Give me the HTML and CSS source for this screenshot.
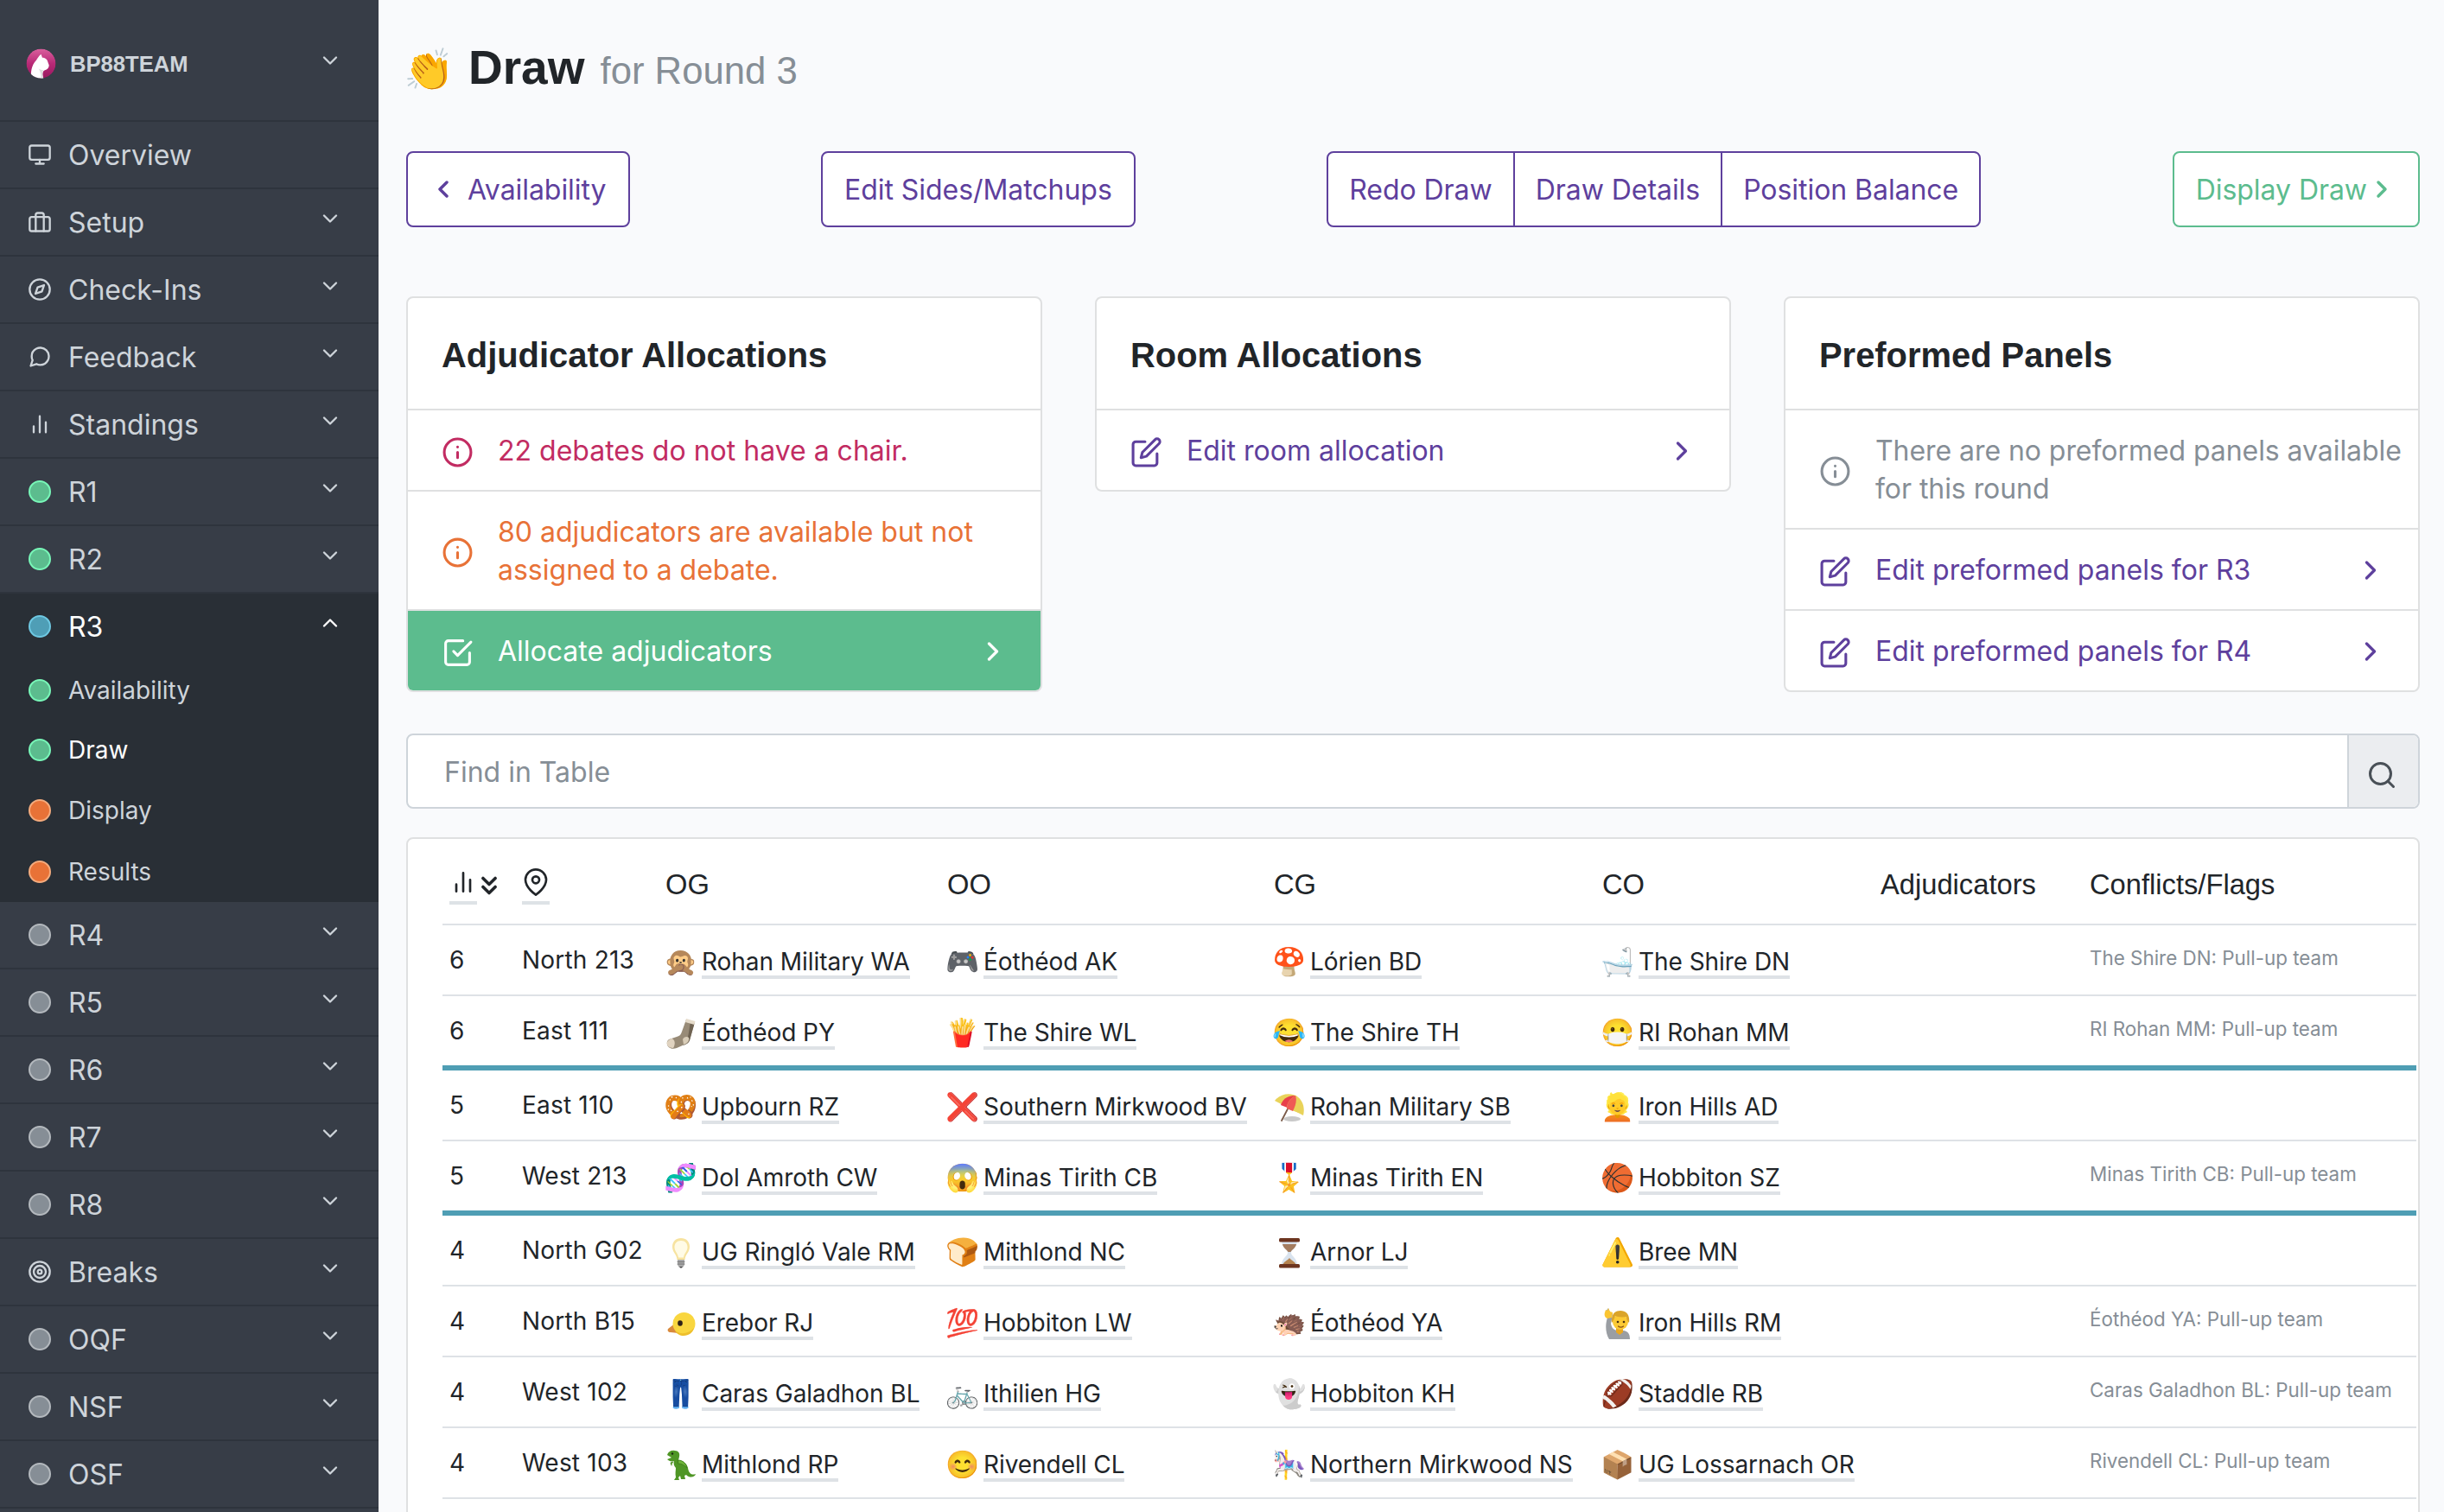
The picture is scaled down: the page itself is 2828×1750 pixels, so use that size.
FILE: index.html
```html
<!DOCTYPE html>
<html lang="en">
<head>
<meta charset="utf-8">
<title>Draw for Round 3</title>
<link rel="stylesheet" href="styles.css">
</head>
<body>
<svg class="defs" width="0" height="0" aria-hidden="true">
  <symbol id="down" viewBox="0 0 24 24"><path d="M6 9l6 6 6-6"/></symbol>
  <symbol id="up" viewBox="0 0 24 24"><path d="M18 15l-6-6-6 6"/></symbol>
  <symbol id="right" viewBox="0 0 24 24"><path d="M9 18l6-6-6-6"/></symbol>
  <symbol id="left" viewBox="0 0 24 24"><path d="M15 18l-6-6 6-6"/></symbol>
  <symbol id="bars" viewBox="0 0 24 24"><path d="M18 20V10M12 20V4M6 20v-6"/></symbol>
  <symbol id="info" viewBox="0 0 24 24"><circle cx="12" cy="12" r="10"/><path d="M12 16v-4M12 8h.01"/></symbol>
  <symbol id="edit" viewBox="0 0 24 24"><path d="M11 4H4a2 2 0 0 0-2 2v14a2 2 0 0 0 2 2h14a2 2 0 0 0 2-2v-7"/><path d="M18.5 2.5a2.121 2.121 0 0 1 3 3L12 15l-4 1 1-4 9.500-9.500z"/></symbol>
  <symbol id="check" viewBox="0 0 24 24"><path d="M9 11l3 3L22 4"/><path d="M21 12v7a2 2 0 0 1-2 2H5a2 2 0 0 1-2-2V5a2 2 0 0 1 2-2h11"/></symbol>
</svg>
<div class="app">
  <nav class="sidebar">
    <div class="brand">
      <svg class="logo" viewBox="0 0 36 36"><defs><linearGradient id="lg" x1="0" y1="0" x2="0" y2="1"><stop offset="0" stop-color="#d9609d"/><stop offset=".5" stop-color="#b92a77"/><stop offset="1" stop-color="#98185f"/></linearGradient><clipPath id="lc"><circle cx="18" cy="18" r="17.500"/></clipPath></defs><g clip-path="url(#lc)"><circle cx="18" cy="18" r="17.500" fill="url(#lg)"/><path d="M18 7l1.500 4c3 0 6 2 6.500 5l1.500 4c0 3-2 5-5 6-3 1-3 5-1.500 10H6c0-8 0-15 6.500-22 1-2 3-5 5.500-7z" fill="#fff"/><path d="M15 24c2 3 3 7 3 12h3c-2-4-2-8 0-10-3 0-5-1-6-2z" fill="#dcdcdc"/></g></svg>
      <span>BP88TEAM</span><svg class="chev"><use href="#down"/></svg>
    </div>
    <div class="item"><svg class="ico" viewBox="0 0 24 24"><rect x="2" y="3" width="20" height="14" rx="2"/><path d="M8 21h8M12 17v4"/></svg><span>Overview</span></div>
    <div class="item"><svg class="ico" viewBox="0 0 24 24"><rect x="2" y="7" width="20" height="14" rx="2"/><path d="M16 21V5a2 2 0 0 0-2-2h-4a2 2 0 0 0-2 2v16"/></svg><span>Setup</span><svg class="chev"><use href="#down"/></svg></div>
    <div class="item"><svg class="ico" viewBox="0 0 24 24"><circle cx="12" cy="12" r="10"/><path d="M16.240 7.760l-2.120 6.360-6.360 2.120 2.120-6.360z"/></svg><span>Check-Ins</span><svg class="chev"><use href="#down"/></svg></div>
    <div class="item"><svg class="ico" viewBox="0 0 24 24"><path d="M21 11.500a8.380 8.380 0 0 1-.9 3.800 8.500 8.500 0 0 1-7.600 4.700 8.380 8.380 0 0 1-3.800-.9L3 21l1.900-5.700a8.380 8.380 0 0 1-.9-3.800 8.500 8.500 0 0 1 4.700-7.600 8.380 8.380 0 0 1 3.800-.9h.5a8.480 8.480 0 0 1 8 8v.5z"/></svg><span>Feedback</span><svg class="chev"><use href="#down"/></svg></div>
    <div class="item"><svg class="ico"><use href="#bars"/></svg><span>Standings</span><svg class="chev"><use href="#down"/></svg></div>
    <div class="item"><i class="dot green"></i><span>R1</span><svg class="chev"><use href="#down"/></svg></div>
    <div class="item"><i class="dot green"></i><span>R2</span><svg class="chev"><use href="#down"/></svg></div>
    <div class="open">
      <div class="item current"><i class="dot blue"></i><span>R3</span><svg class="chev"><use href="#up"/></svg></div>
      <div class="sub"><i class="dot green"></i><span>Availability</span></div>
      <div class="sub short current"><i class="dot green"></i><span>Draw</span></div>
      <div class="sub"><i class="dot orange"></i><span>Display</span></div>
      <div class="sub"><i class="dot orange"></i><span>Results</span></div>
    </div>
    <div class="item"><i class="dot"></i><span>R4</span><svg class="chev"><use href="#down"/></svg></div>
    <div class="item"><i class="dot"></i><span>R5</span><svg class="chev"><use href="#down"/></svg></div>
    <div class="item"><i class="dot"></i><span>R6</span><svg class="chev"><use href="#down"/></svg></div>
    <div class="item"><i class="dot"></i><span>R7</span><svg class="chev"><use href="#down"/></svg></div>
    <div class="item"><i class="dot"></i><span>R8</span><svg class="chev"><use href="#down"/></svg></div>
    <div class="item"><svg class="ico" viewBox="0 0 24 24"><circle cx="12" cy="12" r="10"/><circle cx="12" cy="12" r="6"/><circle cx="12" cy="12" r="2"/></svg><span>Breaks</span><svg class="chev"><use href="#down"/></svg></div>
    <div class="item"><i class="dot"></i><span>OQF</span><svg class="chev"><use href="#down"/></svg></div>
    <div class="item"><i class="dot"></i><span>NSF</span><svg class="chev"><use href="#down"/></svg></div>
    <div class="item"><i class="dot"></i><span>OSF</span><svg class="chev"><use href="#down"/></svg></div>
  </nav>

  <main class="main">
    <h1 class="title"><span class="clap">👏</span><span>Draw</span><small>for Round 3</small></h1>

    <div class="actions">
      <a class="btn back"><svg><use href="#left"/></svg><span>Availability</span></a>
      <a class="btn"><span>Edit Sides/Matchups</span></a>
      <div class="group"><a class="btn"><span>Redo Draw</span></a><a class="btn"><span>Draw Details</span></a><a class="btn"><span>Position Balance</span></a></div>
      <a class="btn next"><span>Display Draw</span><svg><use href="#right"/></svg></a>
    </div>

    <div class="cards">
      <section class="card">
        <h2>Adjudicator Allocations</h2>
        <div class="line danger"><svg><use href="#info"/></svg><p>22 debates do not have a chair.</p></div>
        <div class="line warning"><svg><use href="#info"/></svg><p>80 adjudicators are available but not<br>assigned to a debate.</p></div>
        <a class="line success"><svg><use href="#check"/></svg><p>Allocate adjudicators</p><svg class="go"><use href="#right"/></svg></a>
      </section>
      <section class="card">
        <h2>Room Allocations</h2>
        <a class="line"><svg><use href="#edit"/></svg><p>Edit room allocation</p><svg class="go"><use href="#right"/></svg></a>
      </section>
      <section class="card">
        <h2>Preformed Panels</h2>
        <div class="line muted"><svg><use href="#info"/></svg><p>There are no preformed panels available<br>for this round</p></div>
        <a class="line"><svg><use href="#edit"/></svg><p>Edit preformed panels for R3</p><svg class="go"><use href="#right"/></svg></a>
        <a class="line"><svg><use href="#edit"/></svg><p>Edit preformed panels for R4</p><svg class="go"><use href="#right"/></svg></a>
      </section>
    </div>

    <div class="search"><div class="field">Find in Table</div><div class="addon"><svg viewBox="0 0 24 24"><circle cx="11" cy="11" r="8"/><path d="M21 21l-4.350-4.350"/></svg></div></div>

    <div class="panel">
      <table>
        <colgroup><col class="c-num"><col class="c-room"><col class="c-og"><col class="c-oo"><col class="c-cg"><col class="c-co"><col class="c-adj"><col class="c-flag"></colgroup>
        <thead>
          <tr>
            <th><div class="sort"><span class="tip"><svg><use href="#bars"/></svg></span><svg class="dir" viewBox="0 0 24 24"><path d="M7 13l5 5 5-5M7 6l5 5 5-5"/></svg></div></th>
            <th><div class="sort"><span class="tip"><svg viewBox="0 0 24 24"><path d="M21 10c0 7-9 13-9 13s-9-6-9-13a9 9 0 0 1 18 0z"/><circle cx="12" cy="10" r="3"/></svg></span></div></th>
            <th>OG</th><th>OO</th><th>CG</th><th>CO</th><th>Adjudicators</th><th>Conflicts/Flags</th>
          </tr>
        </thead>
        <tbody>
          <tr><td>6</td><td>North 213</td>
            <td><div class="team"><i>🙊</i><span>Rohan Military WA</span></div></td>
            <td><div class="team"><i>🎮</i><span>Éothéod AK</span></div></td>
            <td><div class="team"><i>🍄</i><span>Lórien BD</span></div></td>
            <td><div class="team"><i>🛁</i><span>The Shire DN</span></div></td>
            <td></td><td class="flag">The Shire DN: Pull-up team</td></tr>
          <tr class="bracket"><td>6</td><td>East 111</td>
            <td><div class="team"><svg class="pic" viewBox="0 0 36 36"><path d="M24 2l10 3-6 21c-1 3-3 4-6 5l-9 4c-5 2-10 0-11-4s1-6 5-7l6-2c4-1 5-3 6-6z" fill="#988b77"/><path d="M29 4l5 1-6 21c-1 3-4 5-8 6 5-4 6-9 7-15z" fill="#6f6352"/><path d="M24 1l10.500 3-1 4L23 5z" fill="#e6dccb"/><path d="M20 25c1-3 5-4 7-2 1 4-2 7-6 8z" fill="#d9cdb8"/><path d="M7 24c4 1 5 6 2 11-5 0-8-3-7-7 1-2 3-3 5-4z" fill="#e0d3c0"/></svg><span>Éothéod PY</span></div></td>
            <td><div class="team"><i>🍟</i><span>The Shire WL</span></div></td>
            <td><div class="team"><i>😂</i><span>The Shire TH</span></div></td>
            <td><div class="team"><i>😷</i><span>RI Rohan MM</span></div></td>
            <td></td><td class="flag">RI Rohan MM: Pull-up team</td></tr>
          <tr><td>5</td><td>East 110</td>
            <td><div class="team"><i>🥨</i><span>Upbourn RZ</span></div></td>
            <td><div class="team"><i>❌</i><span>Southern Mirkwood BV</span></div></td>
            <td><div class="team"><svg class="pic" viewBox="0 0 36 36"><ellipse cx="21" cy="31" rx="10" ry="3" fill="#c9c9c9"/><path d="M23 6L9 33" stroke="#7a5a48" stroke-width="1.800"/><path d="M1 10C7 2 19 0 27 5c7 5 9 14 7 22z" fill="#e9d35a"/><path d="M8 15C10 8 16 4 25 4c4 6 4 13 1 18z" fill="#e8404a"/><path d="M15 19c0-6 3-11 10-15 5 3 7 12 4 20z" fill="#e9d35a"/><path d="M15 19c0-6 3-11 10-15 2 6 0 12-3 18z" fill="#ef5a55"/></svg><span>Rohan Military SB</span></div></td>
            <td><div class="team"><i>👱</i><span>Iron Hills AD</span></div></td>
            <td></td><td class="flag"></td></tr>
          <tr class="bracket"><td>5</td><td>West 213</td>
            <td><div class="team"><i>🧬</i><span>Dol Amroth CW</span></div></td>
            <td><div class="team"><i>😱</i><span>Minas Tirith CB</span></div></td>
            <td><div class="team"><i>🎖️</i><span>Minas Tirith EN</span></div></td>
            <td><div class="team"><i>🏀</i><span>Hobbiton SZ</span></div></td>
            <td></td><td class="flag">Minas Tirith CB: Pull-up team</td></tr>
          <tr><td>4</td><td>North G02</td>
            <td><div class="team"><svg class="pic" viewBox="0 0 36 36"><path d="M18 1c6 0 10 4 10 10 0 7-5 8-5.500 15h-9C13 19 8 18 8 11 8 5 12 1 18 1z" fill="#f7e3a0"/><path d="M18 4c5 0 7.500 3.500 7.500 7.500 0 5-4 7-4.500 12h-6c-.5-5-4.500-7-4.500-12C10.500 7.500 13 4 18 4z" fill="#fffbe6"/><path d="M14 26h8v6l-2 3h-4l-2-3z" fill="#a9a9a9"/><path d="M14 28.500h8M14 31h8" stroke="#777" stroke-width="1"/><path d="M16 34h4l-2 2z" fill="#444"/></svg><span>UG Ringló Vale RM</span></div></td>
            <td><div class="team"><i>🍞</i><span>Mithlond NC</span></div></td>
            <td><div class="team"><svg class="pic" viewBox="0 0 36 36"><path d="M9 4h18c0 8-7 10-7 14s7 6 7 14H9c0-8 7-10 7-14S9 12 9 4z" fill="#d9e3ee"/><path d="M10 8h16c-1 5-5 6-6.500 9h-3c-1.500-3-5.500-4-6.500-9z" fill="#a47c5f"/><path d="M18 24c2 3 7 4 7.500 8h-15c.5-4 5.500-5 7.500-8z" fill="#b5834f"/><rect x="6" y="1" width="24" height="4.500" rx="1.500" fill="#6d3520"/><rect x="6" y="31" width="24" height="4.500" rx="1.500" fill="#6d3520"/></svg><span>Arnor LJ</span></div></td>
            <td><div class="team"><i>⚠️</i><span>Bree MN</span></div></td>
            <td></td><td class="flag"></td></tr>
          <tr><td>4</td><td>North B15</td>
            <td><div class="team"><svg class="pic" viewBox="0 0 36 36"><path d="M12 17l-9 7c-1 2 0 4 3 4l9 1z" fill="#d98a3d"/><circle cx="21.500" cy="18" r="13" fill="#f9d63f"/><path d="M11 26c6 5 16 4 22-3-1 5-6 9-12 9-4 0-8-2-10-6z" fill="#eebf2c"/><ellipse cx="17" cy="17.500" rx="2.800" ry="3.300" fill="#2d2018"/></svg><span>Erebor RJ</span></div></td>
            <td><div class="team"><i>💯</i><span>Hobbiton LW</span></div></td>
            <td><div class="team"><i>🦔</i><span>Éothéod YA</span></div></td>
            <td><div class="team"><svg class="pic" viewBox="0 0 36 36"><path d="M4 4l3-4 2 5 3 1-1 7-1 5c1 5 3 7 7 8h8c5 1 7 4 7 10H8C4 30 3 20 6 11z" fill="#9a9ea3"/><path d="M3 5l1-3 2 1 1-3 2 4 3 1-1 6-5 1c-3-1-4-4-3-7z" fill="#fbc531"/><path d="M16 22h8v6l-4 3-4-3z" fill="#e9a820"/><circle cx="21" cy="16" r="9" fill="#fcca35"/><path d="M11 17C10 8 14 3 21 3c8 0 11 6 10 14-2-2-3-4-3-7-6 1-11 0-13-1-1 3-2 6-4 8z" fill="#dba429"/><circle cx="18" cy="16" r="1.300" fill="#4a3213"/><circle cx="25" cy="16" r="1.300" fill="#4a3213"/><path d="M18.500 21c2 1.500 4 1.500 6 0" stroke="#8a4f15" stroke-width="1.200"/></svg><span>Iron Hills RM</span></div></td>
            <td></td><td class="flag">Éothéod YA: Pull-up team</td></tr>
          <tr><td>4</td><td>West 102</td>
            <td><div class="team"><i>👖</i><span>Caras Galadhon BL</span></div></td>
            <td><div class="team"><i>🚲</i><span>Ithilien HG</span></div></td>
            <td><div class="team"><i>👻</i><span>Hobbiton KH</span></div></td>
            <td><div class="team"><i>🏈</i><span>Staddle RB</span></div></td>
            <td></td><td class="flag">Caras Galadhon BL: Pull-up team</td></tr>
          <tr><td>4</td><td>West 103</td>
            <td><div class="team"><svg class="pic" viewBox="0 0 36 36"><path d="M2 6c1-4 5-6 9-5 4 0 6 3 5 7l-1 4c5 0 10 4 11 9 1 6 4 9 9 7-1 4-7 5-11 1l-2 1 1 4h-5l-1-4-2 2 1 3h-6l2-3c-1-5 0-8 0-11-2-2-3-5-2-8-3 1-6 0-8-2l5-2z" fill="#4f9626"/><path d="M9 14l-3 1 1 3M15 12c5 0 9 4 10 9-3-3-6-5-10-5z" fill="#6fb53a" stroke="#3b7a1c" stroke-width=".8"/><circle cx="8" cy="4.500" r="1.200" fill="#1c2b10"/></svg><span>Mithlond RP</span></div></td>
            <td><div class="team"><i>😊</i><span>Rivendell CL</span></div></td>
            <td><div class="team"><i>🎠</i><span>Northern Mirkwood NS</span></div></td>
            <td><div class="team"><i>📦</i><span>UG Lossarnach OR</span></div></td>
            <td></td><td class="flag">Rivendell CL: Pull-up team</td></tr>
        </tbody>
      </table>
    </div>
  </main>
</div>
</body>
</html>
```
FILE: styles.css
```css
* { box-sizing: border-box; }
html, body { height: 100%; }
body {
  margin: 0;
  overflow: hidden;
  background: #f9fafc;
  color: #212529;
  font: 400 32px/44px Inter, "Liberation Sans", sans-serif;
}
svg { fill: none; stroke: currentColor; stroke-width: 2; stroke-linecap: round; stroke-linejoin: round; flex: none; }
.defs { position: absolute; }
.app { display: flex; height: 1750px; overflow: hidden; }

/* Sidebar */
.sidebar { width: 438px; flex: none; background: #373d47; color: #ced4da; }
.brand, .item, .sub { display: flex; align-items: center; padding: 0 38px 0 32px; }
.brand {
  height: 141px;
  padding: 8px 38px 0 30px;
  border-bottom: 2px solid #2e343d;
  font: bold 25.6px/30px "Liberation Sans", Arial, sans-serif;
}
.logo { width: 35px; height: 35px; margin-right: 16px; stroke: none; }
.item { height: 78px; border-bottom: 2px solid #2e343d; }
.item span { padding-top: 2px; }
.ico { width: 28px; height: 28px; margin-right: 19px; }
.dot {
  width: 26px; height: 26px; flex: none; margin: 0 20px 0 1px;
  border: 2px solid #b4b9be; border-radius: 50%; background: #868e96;
}
.dot.green { background: #5cbc8e; border-color: #78f7b8; }
.dot.blue { background: #4f9eb6; border-color: #6ec8e2; }
.dot.orange { background: #e87237; border-color: #f4ab7d; }
.chev { width: 28px; height: 28px; margin: -8px 4px 0 auto; }
.open { background: #292f36; height: 357px; }
.open .item { height: 76px; border: 0; }
.sub { height: 71px; font-size: 28px; }
.sub.short { height: 68px; }
.current { color: #fff; }

/* Page */
.main { flex: 1; min-width: 0; padding: 0 28px 0 32px; }
.title {
  display: flex; align-items: baseline; height: 175px; margin: 0; padding-top: 47px;
  font: bold 55px/62px "Liberation Sans", Arial, sans-serif;
}
.clap { width: 75px; margin-left: -3px; font-size: 47px; font-weight: 400; }
.title small { margin-left: 18px; font-size: 43.700px; font-weight: 400; color: #868e96; }

.actions { display: flex; justify-content: space-between; height: 168px; align-items: flex-start; }
.btn {
  display: flex; align-items: center; height: 88px; padding: 0 25px;
  border: 2px solid #5e409d; border-radius: 8px; background: #fff; color: #5e409d;
  letter-spacing: -.05px;
}
.btn span { padding-top: 1px; }
.btn svg { width: 32px; height: 32px; stroke-width: 2.600; }
.back svg { margin: 0 12px 0 0; }
.next { color: #5cbc8e; border-color: #5cbc8e; }
.next svg { margin: 0 1px 0 1px; }
.group { display: flex; }
.group .btn { padding: 0 24px; }
.group .btn + .btn { margin-left: -2px; }
.group .btn:not(:last-child) { border-top-right-radius: 0; border-bottom-right-radius: 0; }
.group .btn:not(:first-child) { border-top-left-radius: 0; border-bottom-left-radius: 0; }

.cards { display: grid; grid-template-columns: repeat(3, 1fr); gap: 61px; align-items: start; height: 506px; }
.card { border: 2px solid #dfe0e1; border-radius: 8px; background: #fff; overflow: hidden; }
.card h2 {
  margin: 0; height: 128px; padding: 43px 39px 0;
  font: bold 39.900px/46px "Liberation Sans", Arial, sans-serif;
}
.line { display: flex; align-items: center; padding: 24px 37px 24px 39px; border-top: 2px solid #dfe0e1; color: #5e409d; }
.line p { position: relative; top: 1px; margin: 0 0 0 28px; flex: 1; white-space: nowrap; }
.line svg { width: 37px; height: 37px; margin-top: 4px; }
.line .go { width: 36px; height: 36px; margin-top: 2px; stroke-width: 2.200; }
.danger { color: #c22c62; }
.warning { color: #e87237; }
.success { background: #5cbc8e; color: #fff; }
.muted { color: #868e96; letter-spacing: -.06px; }

.search { display: flex; height: 87px; border: 2px solid #ced4da; border-radius: 8px; background: #fff; overflow: hidden; }
.field { flex: 1; padding: 21px 42px 0; color: #868e96; }
.addon { width: 82px; padding: 28px 0 0 20px; border-left: 2px solid #ced4da; background: #ebedf0; color: #495057; }
.addon svg { width: 36px; height: 36px; display: block; }

/* Draw table */
.panel { height: 900px; margin-top: 33px; padding: 0 2px 0 40px; border: 2px solid #dfe0e1; border-radius: 8px; background: #fff; }
table { width: 2284px; table-layout: fixed; border-collapse: separate; border-spacing: 0; }
.c-num { width: 84px; } .c-room { width: 166px; } .c-og { width: 326px; } .c-oo { width: 378px; }
.c-cg { width: 380px; } .c-co { width: 322px; } .c-adj { width: 242px; } .c-flag { width: 386px; }
th {
  height: 100px; padding: 34px 8px 0; text-align: left; vertical-align: top; border-bottom: 2px solid #dee2e6;
  font: 400 32.700px/38px "Liberation Sans", Arial, sans-serif;
}
.sort { display: flex; }
.tip { height: 42px; border-bottom: 4px solid #dee2e6; }
.tip svg { width: 32px; height: 32px; display: block; }
.dir { width: 34px; height: 34px; margin: 3px 0 0 -3px; stroke-width: 2.500; }
td { height: 82px; padding: 23px 8px 0; vertical-align: top; border-bottom: 2px solid #dee2e6; font-size: 28px; line-height: 34px; white-space: nowrap; }
td:nth-child(2) { letter-spacing: .2px; }
.bracket td { height: 86px; border-bottom: 6px solid #4f9eb4; }
.team { display: flex; padding-top: 1px; letter-spacing: -.05px; }
.team span { height: 38px; line-height: 36px; border-bottom: 4px solid #dee2e6; }
.team i { width: 44px; margin-left: -2px; font-style: normal; font-size: 31.500px; line-height: 36px; }
.pic { width: 36px; height: 36px; margin: 1px 6px 0 0; stroke: none; }
.flag { padding-top: 24px; font-size: 22.400px; line-height: 27px; color: #868e96; }
```
